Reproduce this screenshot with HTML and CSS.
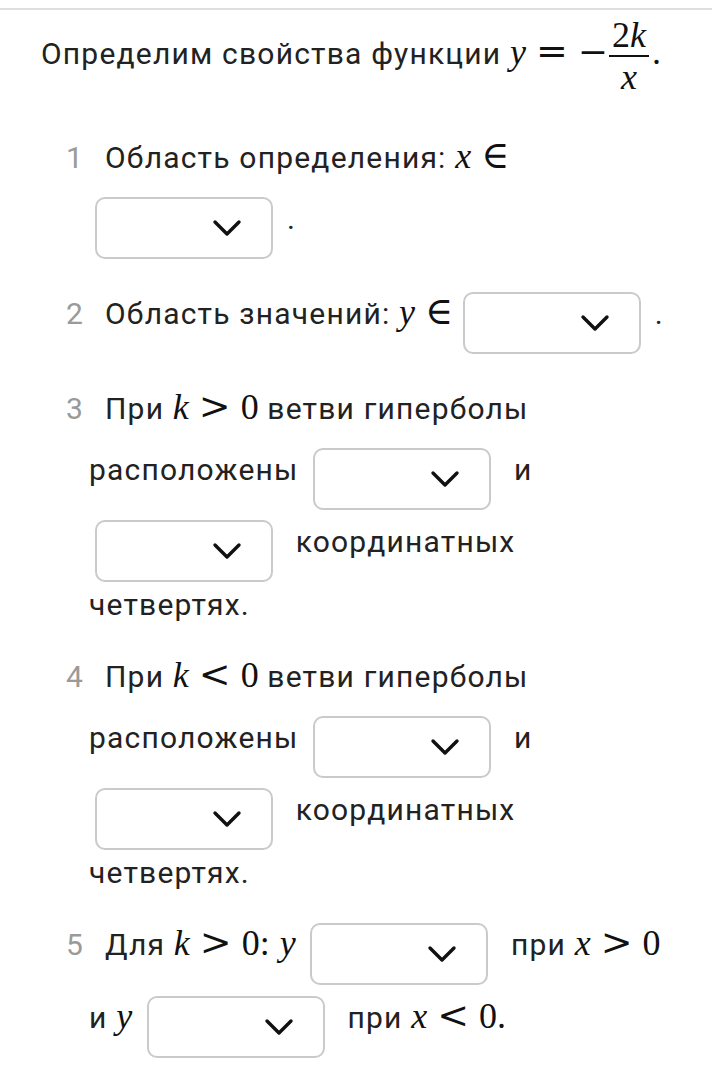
FILE: index.html
```html
<!DOCTYPE html>
<html lang="ru">
<head>
<meta charset="utf-8">
<title>Свойства функции</title>
<link rel="stylesheet" href="styles.css">
</head>
<body>
<div class="rule"></div>
<p class="intro">Определим свойства функции <span class="hm"><i>y</i><span class="rel">=</span><span class="minus">−</span><span class="frac"><span class="numer">2<i>k</i></span><span class="bar"></span><span class="denom"><i>x</i></span></span>.</span></p>
<ol class="tasks">
  <li class="task"><span class="num">1</span>Область определения: <span class="m"><i>x</i><span class="rel rel-end">∈</span></span> <span class="sel"><svg class="chev" viewBox="0 0 30 18" width="30" height="18"><path d="M3 3 L15 15 L27 3"/></svg></span>.</li>
  <li class="task"><span class="num">2</span>Область значений: <span class="m"><i>y</i><span class="rel rel-end">∈</span></span> <span class="sel"><svg class="chev" viewBox="0 0 30 18" width="30" height="18"><path d="M3 3 L15 15 L27 3"/></svg></span>.</li>
  <li class="task"><span class="num">3</span>При <span class="m"><i>k</i><span class="rel">&gt;</span>0</span> ветви гиперболы расположены <span class="sel"><svg class="chev" viewBox="0 0 30 18" width="30" height="18"><path d="M3 3 L15 15 L27 3"/></svg></span> и <span class="sel"><svg class="chev" viewBox="0 0 30 18" width="30" height="18"><path d="M3 3 L15 15 L27 3"/></svg></span> координатных четвертях.</li>
  <li class="task"><span class="num">4</span>При <span class="m"><i>k</i><span class="rel">&lt;</span>0</span> ветви гиперболы расположены <span class="sel"><svg class="chev" viewBox="0 0 30 18" width="30" height="18"><path d="M3 3 L15 15 L27 3"/></svg></span> и <span class="sel"><svg class="chev" viewBox="0 0 30 18" width="30" height="18"><path d="M3 3 L15 15 L27 3"/></svg></span> координатных четвертях.</li>
  <li class="task"><span class="num">5</span>Для <span class="m"><i>k</i><span class="rel">&gt;</span>0<span class="colon">:</span><i>y</i></span> <span class="sel"><svg class="chev" viewBox="0 0 30 18" width="30" height="18"><path d="M3 3 L15 15 L27 3"/></svg></span> при <span class="m"><i>x</i><span class="rel">&gt;</span>0</span> и <span class="m"><i>y</i></span> <span class="sel"><svg class="chev" viewBox="0 0 30 18" width="30" height="18"><path d="M3 3 L15 15 L27 3"/></svg></span> при <span class="m"><i>x</i><span class="rel">&lt;</span>0.</span></li>
</ol>
</body>
</html>
```
FILE: styles.css
```css
html, body {
  margin: 0;
  padding: 0;
  background: #ffffff;
}

body {
  font-family: Roboto, "Liberation Sans", sans-serif;
  color: #222222;
  font-size: 30px;
  letter-spacing: 1.2px;
}

.rule {
  height: 2px;
  background: #dedede;
  margin-top: 8px;
}

.intro {
  margin: 8px 0 0 0;
  padding: 0 37px 0 41px;
  line-height: 40px;
}

.hm {
  font-family: "Liberation Serif", "DejaVu Serif", serif;
  font-size: 36px;
  letter-spacing: 0;
  color: #111111;
}

.hm i, .m i {
  font-style: italic;
}

.rel {
  font-family: "DejaVu Serif", serif;
  font-size: 38px;
  margin: 0 10px;
  font-style: normal;
}

.rel-end {
  margin-right: -5px;
}

.minus {
  font-family: "DejaVu Serif", serif;
  font-size: 36px;
}

.frac {
  display: inline-flex;
  flex-direction: column;
  align-items: center;
  vertical-align: middle;
  margin: 0 3px 0 1px;
}

.numer, .denom {
  display: block;
  line-height: 34px;
  padding: 0 3px;
}

.numer {
  padding-bottom: 3px;
}

.denom {
  padding-top: 3px;
}

.bar {
  display: block;
  align-self: stretch;
  height: 2px;
  background: #111111;
}

.tasks {
  list-style: none;
  margin: 34px 0 0 0;
  padding: 0 40px 0 89px;
}

.task {
  line-height: 40px;
  text-indent: -23px;
  margin-bottom: 22px;
}

.num {
  display: inline-block;
  text-indent: 0;
  width: 12px;
  text-align: right;
  margin-right: 27px;
  color: #9a9a9a;
  letter-spacing: 0;
}

.m {
  display: inline-block;
  text-indent: 0;
  font-family: "Liberation Serif", "DejaVu Serif", serif;
  font-size: 36px;
  letter-spacing: 0;
  line-height: 34px;
  padding: 10px 0 17px 0;
  color: #111111;
}

.colon {
  margin-right: 10px;
}

.sel {
  display: inline-block;
  text-indent: 0;
  box-sizing: border-box;
  width: 178px;
  height: 62px;
  margin: 7px 14px 3px 6px;
  border: 2px solid #cacaca;
  border-radius: 10px;
  vertical-align: -33px;
  padding: 20px 29px 0 0;
}

.chev {
  display: block;
  margin-left: auto;
}

.chev path {
  fill: none;
  stroke: #111111;
  stroke-width: 3.4;
  stroke-linecap: round;
  stroke-linejoin: round;
}
```
